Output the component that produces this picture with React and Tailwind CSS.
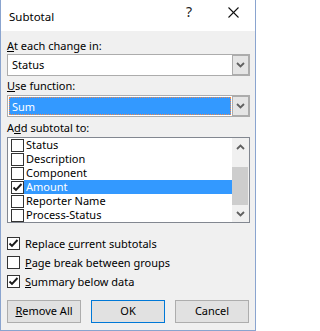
const fields = ['Status', 'Description', 'Component', 'Amount', 'Reporter Name', 'Process-Status'];

function Chevron({ up = false }) {
  return (
    <svg width="9" height="6" viewBox="0 0 9 6" className="block">
      <polyline
        points={up ? '1,5 4.5,1.5 8,5' : '1,1 4.5,4.5 8,1'}
        fill="none"
        stroke="#606060"
        strokeWidth="1.8"
      />
    </svg>
  );
}

function CheckBox({ checked }) {
  return (
    <span className="w-[13px] h-[13px] shrink-0 border border-[#333333] bg-white flex items-center justify-center">
      {checked && (
        <svg width="11" height="11" viewBox="0 0 11 11" className="block">
          <polyline points="1.5,5.5 4,8 9.5,2" fill="none" stroke="#1a1a1a" strokeWidth="1.9" />
        </svg>
      )}
    </span>
  );
}

function Combo({ value, focused = false }) {
  return (
    <div className="h-[22px] w-[243px] border border-[#acacac] bg-white flex">
      <div className="flex-1 p-px">
        <div
          className={
            focused
              ? 'h-full bg-[#3399ff] text-white border border-dotted border-[#f08a4b] pl-[2px] leading-[17px]'
              : 'h-full pl-[3px] leading-[18px] text-black'
          }
        >
          {value}
        </div>
      </div>
      <div className="w-[17px] border border-[#acacac] bg-[#e5e5e5] flex items-center justify-center">
        <Chevron />
      </div>
    </div>
  );
}

function Option({ label, checked, accel, rest }) {
  return (
    <label className="h-[19px] flex items-center gap-[5px]">
      <CheckBox checked={checked} />
      <span className="leading-[15px]">
        {label}
        <u>{accel}</u>
        {rest}
      </span>
    </label>
  );
}

export default function App() {
  return (
    <div className="w-[256px] h-[331px] bg-[#f0f0f0] border-x border-b border-[#8aa4cf] flex flex-col font-['Noto_Sans',sans-serif] text-[11px] text-black">
      {/* title bar */}
      <div className="h-[31px] bg-white flex pl-[8px] shrink-0">
        <span className="flex-1 self-center pt-[2px] text-[11.5px]">Subtotal</span>
        <span className="mt-[5px] text-[14px] leading-[14px] mr-[36px] text-[#222]">?</span>
        <svg width="11" height="11" viewBox="0 0 11 11" className="mt-[7px] mr-[16px] block">
          <line x1="0.5" y1="0.5" x2="10.5" y2="10.5" stroke="#111" strokeWidth="1.1" />
          <line x1="10.5" y1="0.5" x2="0.5" y2="10.5" stroke="#111" strokeWidth="1.1" />
        </svg>
      </div>

      {/* body */}
      <div className="pl-[6px] flex flex-col">
        <div className="mt-[7px] leading-[16px]">
          <u>A</u>t each change in:
        </div>
        <Combo value="Status" />

        <div className="mt-[2px] leading-[16px]">
          <u>U</u>se function:
        </div>
        <div className="mt-px">
          <Combo value="Sum" focused />
        </div>

        <div className="mt-[3px] leading-[16px]">
          A<u>d</u>d subtotal to:
        </div>
        <div className="mt-px w-[243px] h-[86px] border border-[#828790] bg-white flex">
          <div className="flex-1 flex flex-col pl-[3px]">
            {fields.map((f) => {
              const sel = f === 'Amount';
              return (
                <div key={f} className="h-[14px] flex items-center">
                  <CheckBox checked={sel} />
                  <span
                    className={
                      'flex-1 h-[14px] pl-[2px] leading-[14px] ' + (sel ? 'bg-[#3399ff] text-white' : '')
                    }
                  >
                    {f}
                  </span>
                </div>
              );
            })}
          </div>
          <div className="w-[17px] bg-[#f0f0f0] flex flex-col">
            <div className="h-[17px] flex items-center justify-center">
              <Chevron up />
            </div>
            <div className="flex-1 flex flex-col justify-end">
              <div className="h-[38px] mr-px bg-[#cdcdcd]" />
            </div>
            <div className="h-[17px] flex items-center justify-center">
              <Chevron />
            </div>
          </div>
        </div>

        <div className="mt-[11px] flex flex-col">
          <Option checked label="Replace " accel="c" rest="urrent subtotals" />
          <Option checked={false} label="" accel="P" rest="age break between groups" />
          <Option checked label="" accel="S" rest="ummary below data" />
        </div>

        <div className="mt-[9px] flex gap-[10px] w-[243px]">
          <button className="w-[74px] h-[23px] bg-[#e1e1e1] border border-[#adadad]">
            <u>R</u>emove All
          </button>
          <button className="w-[74px] h-[23px] bg-[#e1e1e1] border border-[#0078d7]">OK</button>
          <button className="w-[74px] h-[23px] bg-[#e1e1e1] border border-[#adadad]">Cancel</button>
        </div>
      </div>
    </div>
  );
}
